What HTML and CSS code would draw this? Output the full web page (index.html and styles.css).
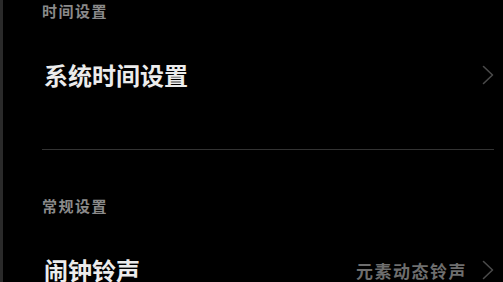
FILE: index.html
```html
<!DOCTYPE html>
<html lang="zh">
<head>
<meta charset="utf-8">
<link rel="stylesheet" href="styles.css">
</head>
<body>
<div class="page">
  <div class="edge"></div>
  <div class="content">
    <div class="section-title">时间设置</div>
    <div class="row">
      <span class="row-label">系统时间设置</span>
      <span class="row-right">
        <svg class="chevron" width="12" height="20" viewBox="0 0 12 20"><path d="M1.5 1.5 L10.5 10 L1.5 18.5" fill="none" stroke="#4a4a4a" stroke-width="1.6" stroke-linecap="round" stroke-linejoin="round"/></svg>
      </span>
    </div>
    <div class="divider"></div>
    <div class="section-title second">常规设置</div>
    <div class="row">
      <span class="row-label">闹钟铃声</span>
      <span class="row-right">
        <span class="row-value">元素动态铃声</span>
        <svg class="chevron" width="12" height="20" viewBox="0 0 12 20"><path d="M1.5 1.5 L10.5 10 L1.5 18.5" fill="none" stroke="#4a4a4a" stroke-width="1.6" stroke-linecap="round" stroke-linejoin="round"/></svg>
      </span>
    </div>
  </div>
</div>
</body>
</html>
```
FILE: styles.css
```css
html, body {
  margin: 0;
  padding: 0;
  background: #000;
  height: 100%;
  overflow: hidden;
}
body {
  font-family: "Noto Sans CJK SC", "Noto Sans", sans-serif;
}
.page {
  display: flex;
  height: 282px;
}
.edge {
  width: 3px;
  background: #2a2a2a;
  flex: none;
}
.content {
  flex: 1;
  padding-left: 39px;
  padding-right: 9px;
}
.section-title {
  height: 22px;
  line-height: 22px;
  font-size: 15px;
  font-weight: 700;
  color: #8a8a8a;
  letter-spacing: 1.5px;
}
.section-title.second {
  margin-top: 45px;
}
.row {
  height: 106px;
  display: flex;
  align-items: center;
  justify-content: space-between;
}
.row-label {
  font-size: 24px;
  font-weight: 700;
  color: #ececec;
  padding-left: 2px;
  line-height: 1;
}
.row-right {
  display: flex;
  align-items: center;
  gap: 15px;
}
.row-value {
  font-size: 17px;
  font-weight: 700;
  color: #6e6e6e;
  letter-spacing: 1.5px;
}
.chevron {
  display: block;
}
.divider {
  height: 1px;
  background: #333;
  margin-top: 21px;
}
```
